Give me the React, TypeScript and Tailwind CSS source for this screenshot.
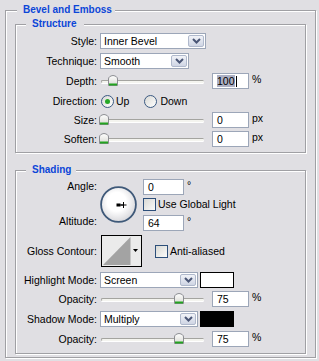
import React from "react";

function Label({ children }: { children: React.ReactNode }) {
  return <div className="w-[81px] shrink-0 whitespace-nowrap text-right leading-[16px]">{children}</div>;
}

function Chevron() {
  return (
    <svg width="9" height="6" viewBox="0 0 9 6">
      <path d="M1 1 L4.5 4.5 L8 1" fill="none" stroke="#4a5676" strokeWidth="2" />
    </svg>
  );
}

function Select({ value, className }: { value: string; className: string }) {
  return (
    <div className={"flex h-[16px] shrink-0 border border-[#9ca6b8] bg-white " + className}>
      <span className="flex-1 whitespace-nowrap pl-[3px] leading-[14px]">{value}</span>
      <span className="my-[1px] mr-[1px] flex w-[16px] items-center justify-center rounded-[2px] border border-[#b0b9cc] bg-gradient-to-b from-[#f1f3f8] to-[#cfd5e4]">
        <Chevron />
      </span>
    </div>
  );
}

function Field({ className, children }: { className: string; children: React.ReactNode }) {
  return (
    <div className={"h-[16px] shrink-0 whitespace-nowrap border border-[#9ca6b8] bg-white pl-[4px] leading-[14px] " + className}>
      {children}
    </div>
  );
}

function Unit({ children, className }: { children: React.ReactNode; className: string }) {
  return <span className={"self-start leading-[12px] " + className}>{children}</span>;
}

function Thumb({ left }: { left: number }) {
  return (
    <svg className="absolute top-[2px]" style={{ left }} width="10" height="11" viewBox="0 0 10 11">
      <defs>
        <linearGradient id="thumbg" x1="0" y1="0" x2="0" y2="1">
          <stop offset="0" stopColor="#ffffff" />
          <stop offset="1" stopColor="#d9d9d3" />
        </linearGradient>
      </defs>
      <path d="M0.5 10.5 V4 Q0.5 1.2 5 0.5 Q9.5 1.2 9.5 4 V10.5 Z" fill="url(#thumbg)" stroke="#8c8d92" />
      <rect x="1" y="8.5" width="8" height="2" fill="#23a320" />
    </svg>
  );
}

function Slider({ pos }: { pos: number }) {
  return (
    <div className="relative ml-[3px] h-[16px] w-[106px] shrink-0">
      <div className="absolute left-[1px] top-[7px] h-[3px] w-[103px] rounded-[2px] border-l border-t border-[#a4a4a0] bg-[#f4f4ef] shadow-[0_1px_0_#ffffff]" />
      <Thumb left={Math.round(pos * 100) - 1} />
    </div>
  );
}

function Check() {
  return <span className="block h-[13px] w-[13px] shrink-0 border border-[#2d4f7a] bg-gradient-to-br from-[#d9d9d5] to-[#fbfbfa]" />;
}

function Radio({ checked }: { checked?: boolean }) {
  return (
    <span className="flex h-[13px] w-[13px] shrink-0 items-center justify-center rounded-full border border-[#3b5a82] bg-gradient-to-br from-[#d9d9d5] to-white">
      {checked && <span className="h-[5px] w-[5px] rounded-full bg-[#26a826]" />}
    </span>
  );
}

function AngleDial() {
  return (
    <svg className="ml-[3px] mt-[7px] shrink-0" width="37" height="37" viewBox="0 0 37 37">
      <defs>
        <radialGradient id="dialg" cx="0.45" cy="0.42" r="0.6">
          <stop offset="0.45" stopColor="#ffffff" />
          <stop offset="1" stopColor="#d6d6da" />
        </radialGradient>
      </defs>
      <circle cx="18.5" cy="18.5" r="17.4" fill="url(#dialg)" stroke="#3f5979" strokeWidth="1.8" />
      <rect x="16.5" y="17.5" width="4" height="3" fill="#000" />
      <line x1="20" y1="19" x2="23.5" y2="19" stroke="#000" strokeWidth="1" />
      <line x1="23.5" y1="16" x2="23.5" y2="22" stroke="#000" strokeWidth="1" />
      <line x1="21" y1="19" x2="26.5" y2="19" stroke="#000" strokeWidth="1" />
    </svg>
  );
}

function Contour() {
  return (
    <div className="ml-[4px] h-[32px] w-[41px] shrink-0 border border-black">
      <svg width="39" height="30" viewBox="0 0 39 30" className="block">
        <rect width="39" height="30" fill="#ebebeb" />
        <polygon points="1,29 28.5,1 28.5,29" fill="#a3a3a3" />
        <polygon points="31,13 36,13 33.5,16" fill="#000" />
      </svg>
    </div>
  );
}

export default function App() {
  return (
    <div className="h-[361px] w-[319px] overflow-hidden bg-[#e0dfe3] pl-[5px] pt-[4px] font-['Liberation_Sans',Arial,sans-serif] text-[10.5px] text-black">
      <fieldset className="w-[311px] border border-[#a0a0a4] px-[9px] pb-[3px] pt-[2px] shadow-[inset_1px_1px_0_#ffffff,1px_1px_0_#ffffff]">
        <legend className="ml-[2px] bg-[#e0dfe3] pl-[6px] pr-[3px] text-[10px] font-bold leading-[12px] text-[#0c46d8]">
          Bevel and Emboss
        </legend>

        {/* Structure */}
        <fieldset className="w-[291px] border border-[#a0a0a4] pb-[5px] pt-[3px] shadow-[inset_1px_1px_0_#ffffff,1px_1px_0_#ffffff]">
          <legend className="ml-[10px] bg-[#e0dfe3] pl-[6px] pr-[8px] text-[10px] font-bold leading-[12px] text-[#0c46d8]">
            Structure
          </legend>

          <div className="flex h-[16px] items-center">
            <Label>Style:</Label>
            <Select value="Inner Bevel" className="ml-[3px] w-[106px]" />
          </div>

          <div className="mt-[4px] flex h-[16px] items-center">
            <Label>Technique:</Label>
            <Select value="Smooth" className="ml-[3px] w-[89px]" />
          </div>

          <div className="mt-[4px] flex h-[16px] items-center">
            <Label>Depth:</Label>
            <Slider pos={0.09} />
            <Field className="ml-[6px] w-[37px]">
              <span className="bg-[#acb0c4]">100</span>
              <span className="ml-[1px] inline-block h-[11px] w-[1px] bg-black align-[-2px]" />
            </Field>
            <Unit className="ml-[3px]">%</Unit>
          </div>

          <div className="mt-[4px] flex h-[16px] items-center">
            <Label>Direction:</Label>
            <span className="ml-[4px]">
              <Radio checked />
            </span>
            <span className="ml-[2px] leading-[16px]">Up</span>
            <span className="ml-[15px]">
              <Radio />
            </span>
            <span className="ml-[3px] leading-[16px]">Down</span>
          </div>

          <div className="mt-[3px] flex h-[16px] items-center">
            <Label>Size:</Label>
            <Slider pos={0} />
            <Field className="ml-[6px] w-[37px]">0</Field>
            <Unit className="ml-[3px]">px</Unit>
          </div>

          <div className="mt-[3px] flex h-[16px] items-center">
            <Label>Soften:</Label>
            <Slider pos={0} />
            <Field className="ml-[6px] w-[37px]">0</Field>
            <Unit className="ml-[3px]">px</Unit>
          </div>
        </fieldset>

        {/* Shading */}
        <fieldset className="mt-[11px] w-[291px] border border-[#a0a0a4] pb-[6px] pt-[3px] shadow-[inset_1px_1px_0_#ffffff,1px_1px_0_#ffffff]">
          <legend className="ml-[10px] bg-[#e0dfe3] pl-[6px] pr-[5px] text-[10px] font-bold leading-[12px] text-[#0c46d8]">
            Shading
          </legend>

          <div className="flex h-[52px]">
            <div className="flex w-[81px] shrink-0 flex-col text-right">
              <div className="-mt-[1px] leading-[16px]">Angle:</div>
              <div className="mt-[19px] leading-[16px]">Altitude:</div>
            </div>
            <AngleDial />
            <div className="ml-[6px] flex flex-col">
              <div className="flex">
                <Field className="w-[41px]">0</Field>
                <Unit className="ml-[3px]">°</Unit>
              </div>
              <div className="mt-[3px] flex h-[13px] items-center">
                <Check />
                <span className="ml-[2px] whitespace-nowrap leading-[13px]">Use Global Light</span>
              </div>
              <div className="mt-[4px] flex">
                <Field className="w-[41px]">64</Field>
                <Unit className="ml-[3px]">°</Unit>
              </div>
            </div>
          </div>

          <div className="mt-[4px] flex h-[32px] items-center">
            <Label>Gloss Contour:</Label>
            <Contour />
            <span className="ml-[13px] block">
              <Check />
            </span>
            <span className="ml-[2px] leading-[16px]">Anti-aliased</span>
          </div>

          <div className="mt-[5px] flex h-[16px] items-center">
            <Label>Highlight Mode:</Label>
            <Select value="Screen" className="ml-[3px] w-[98px]" />
            <span className="ml-[2px] h-[16px] w-[34px] shrink-0 border border-black bg-white" />
          </div>

          <div className="mt-[3px] flex h-[16px] items-center">
            <Label>Opacity:</Label>
            <Slider pos={0.75} />
            <Field className="ml-[6px] w-[37px]">75</Field>
            <Unit className="ml-[3px]">%</Unit>
          </div>

          <div className="mt-[4px] flex h-[16px] items-center">
            <Label>Shadow Mode:</Label>
            <Select value="Multiply" className="ml-[3px] w-[98px]" />
            <span className="ml-[2px] h-[16px] w-[34px] shrink-0 border border-black bg-black" />
          </div>

          <div className="mt-[4px] flex h-[16px] items-center">
            <Label>Opacity:</Label>
            <Slider pos={0.75} />
            <Field className="ml-[6px] w-[37px]">75</Field>
            <Unit className="ml-[3px]">%</Unit>
          </div>
        </fieldset>
      </fieldset>
    </div>
  );
}
